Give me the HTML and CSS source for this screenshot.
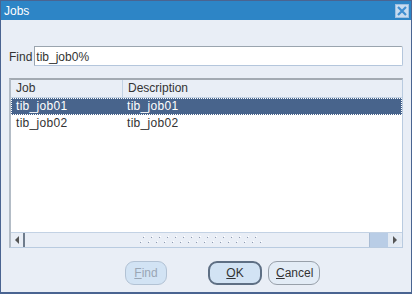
FILE: index.html
```html
<!DOCTYPE html>
<html lang="en">
<head>
    <meta charset="UTF-8">
    <title>Jobs</title>
    <link rel="stylesheet" href="styles.css">
</head>
<body>
<div class="window">
    <div class="titlebar">
        <span class="title">Jobs</span>
        <span class="close">
            <svg width="12" height="12" viewBox="0 0 12 12">
                <path d="M2 2 L10 10 M10 2 L2 10" stroke="#3f8fd0" stroke-width="2.2"/>
            </svg>
        </span>
    </div>
    <div class="content">
        <div class="find-row">
            <label for="find">Find</label>
            <input type="text" id="find" value="tib_job0%">
        </div>
        <div class="table">
            <div class="grid-head">
                <div class="col-job">Job</div>
                <div class="col-desc">Description</div>
            </div>
            <div class="rows">
                <div class="row selected">
                    <div class="col-job">tib_job01</div>
                    <div class="col-desc">tib_job01</div>
                </div>
                <div class="row">
                    <div class="col-job">tib_job02</div>
                    <div class="col-desc">tib_job02</div>
                </div>
            </div>
            <div class="hscroll">
                <span class="arrow left">
                    <svg width="6" height="8" viewBox="0 0 6 8"><path d="M5 0 L1 4 L5 8 Z" fill="#555"/></svg>
                </span>
                <span class="track">
                    <svg class="grip" width="124" height="9" viewBox="0 0 124 9">
                        <defs>
                            <pattern id="dots" width="8" height="9" patternUnits="userSpaceOnUse">
                                <rect x="5" y="0" width="1" height="1" fill="#ffffff"/>
                                <rect x="4" y="1" width="1" height="1" fill="#8e9ab0"/>
                                <rect x="2" y="5" width="1" height="1" fill="#ffffff"/>
                                <rect x="1" y="6" width="1" height="1" fill="#8e9ab0"/>
                            </pattern>
                        </defs>
                        <rect width="124" height="9" fill="url(#dots)"/>
                    </svg>
                </span>
                <span class="thumb-end"></span>
                <span class="arrow right">
                    <svg width="6" height="8" viewBox="0 0 6 8"><path d="M1 0 L5 4 L1 8 Z" fill="#555"/></svg>
                </span>
            </div>
        </div>
        <div class="buttons">
            <button class="btn disabled"><u>F</u>ind</button>
            <button class="btn default"><u>O</u>K</button>
            <button class="btn"><u>C</u>ancel</button>
        </div>
    </div>
</div>
</body>
</html>
```
FILE: styles.css
```css
html, body {
    margin: 0;
    padding: 0;
    background: #ffffff;
}

body {
    font-family: "Liberation Sans", Arial, sans-serif;
    font-size: 12px;
    color: #333;
}

.window {
    width: 410px;
    height: 292px;
    border-left: 1px solid #4a6491;
    border-right: 1px solid #4a6491;
    border-bottom: 2px solid #4a6491;
    background-color: #e9eef6;
    display: flex;
    flex-direction: column;
}

.titlebar {
    height: 20px;
    background-color: #2d85c6;
    border-top: 1px solid #4a6491;
    box-sizing: border-box;
    display: flex;
    align-items: center;
    justify-content: space-between;
    padding: 0 2px 0 3px;
}

.title {
    color: #fff;
    font-size: 12px;
}

.close {
    width: 14px;
    height: 14px;
    background-color: #c7dcf0;
    display: flex;
    align-items: center;
    justify-content: center;
    border: 1px solid #9fc0e0;
    box-sizing: border-box;
}

.content {
    flex: 1;
    padding: 0 8px 0 8px;
    display: flex;
    flex-direction: column;
}

.find-row {
    display: flex;
    align-items: center;
    margin-top: 26px;
}

.find-row label {
    margin-right: 2px;
    padding-top: 2px;
}

.find-row input {
    flex: 1;
    height: 20px;
    box-sizing: border-box;
    border: 1px solid #b4c6dc;
    border-top-color: #9aa4ae;
    border-left-color: #9aa4ae;
    font-family: inherit;
    font-size: 12px;
    color: #333;
    padding: 1px 1px 0 1px;
    border-radius: 0 2px 2px 0;
    outline: none;
}

.table {
    margin-top: 12px;
    height: 170px;
    box-sizing: border-box;
    border: 1px solid #b9cbe0;
    border-top: 2px solid #a3aab2;
    border-left: 2px solid #b3bcc6;
    background: #fff;
    display: flex;
    flex-direction: column;
}

.grid-head {
    display: flex;
    height: 17px;
    background-color: #e9eef6;
    border-bottom: 1px solid #c3d2e4;
}

.grid-head .col-job {
    border-right: 1px solid #c3d2e4;
}

.col-job {
    width: 106px;
    padding-left: 5px;
    line-height: 17px;
}

.col-desc {
    flex: 1;
    padding-left: 5px;
    line-height: 17px;
}

.rows {
    flex: 1;
}

.row {
    display: flex;
    height: 17px;
    box-sizing: border-box;
}

.row .col-job,
.row .col-desc {
    line-height: 15px;
    letter-spacing: 0.3px;
}

.row.selected {
    background-color: #48648c;
    color: #fff;
    border: 1px dotted #ffffff;
}

.row.selected .col-job {
    padding-left: 4px;
}

.row:not(.selected) {
    padding-top: 1px;
}

.hscroll {
    height: 14px;
    display: flex;
    background-color: #e9eef6;
    border-top: 1px solid #c3d2e4;
}

.arrow {
    width: 14px;
    display: flex;
    align-items: center;
    justify-content: center;
    background-color: #e9eef6;
}

.arrow.left {
    border-radius: 7px 0 0 7px;
    border-right: 2px solid #6f7c8c;
    width: 12px;
}

.arrow.right {
    border-radius: 0 7px 7px 0;
    background-color: #e3eaf3;
}

.track {
    flex: 1;
    display: flex;
    align-items: center;
    padding-left: 114px;
}

.grip {
    display: block;
}

.thumb-end {
    width: 18px;
    background-color: #b9cde6;
    border-left: 1px solid #a9bcd4;
}

.buttons {
    display: flex;
    margin-top: 13px;
    padding-left: 116px;
}

.btn {
    font-family: inherit;
    font-size: 12px;
    color: #333;
    height: 24px;
    background-color: #d2e3f4;
    border: 1px solid #98a8bc;
    border-radius: 9px;
    padding: 0 7px;
    cursor: pointer;
}

.btn.disabled {
    color: #9aa6b4;
    border-color: #b2c2d4;
    width: 42px;
}

.btn.default {
    margin-left: 41px;
    width: 54px;
    border: 2px solid #5e6f84;
}

.btn:last-child {
    margin-left: 6px;
    width: 52px;
    background-color: #e3ecf6;
    border-color: #98a0aa;
}
```
